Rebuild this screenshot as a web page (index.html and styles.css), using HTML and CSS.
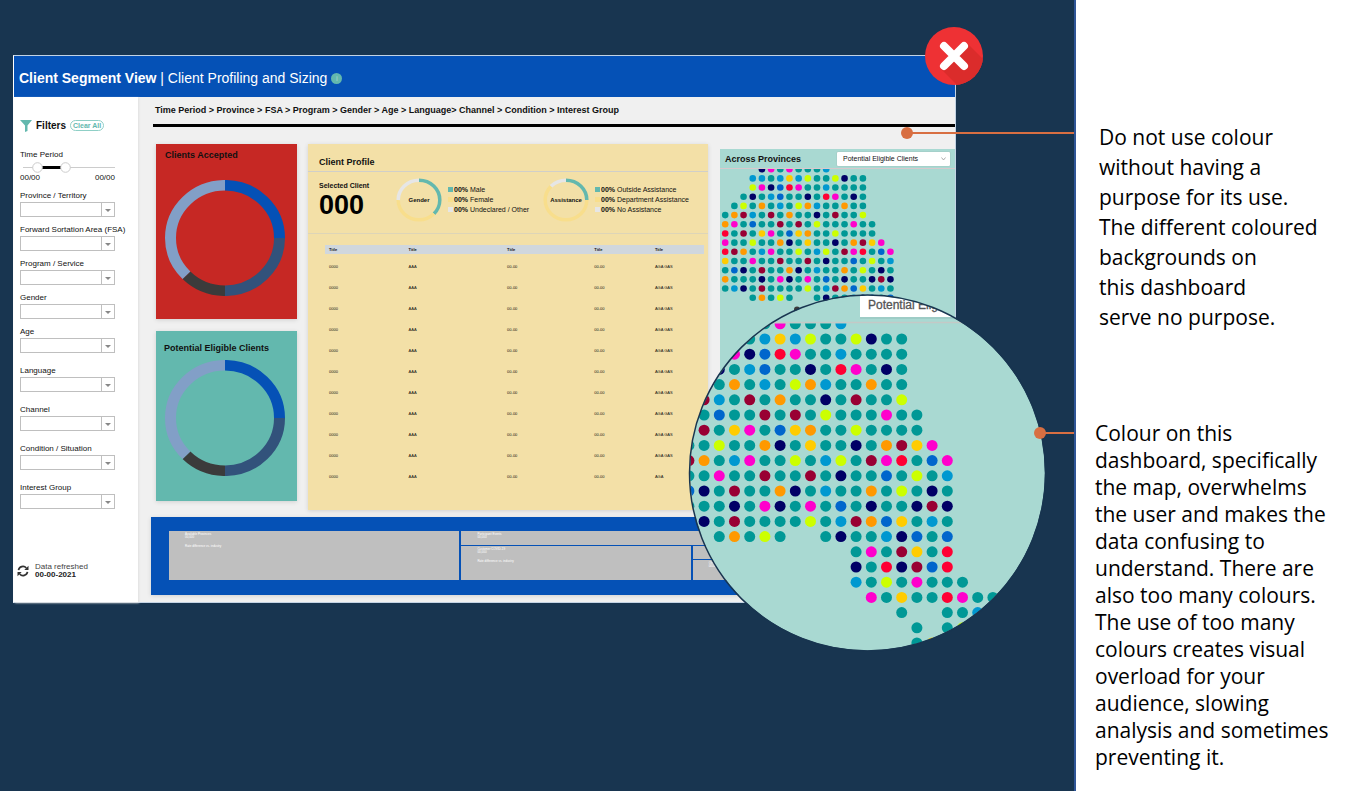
FILE: index.html
```html
<!DOCTYPE html>
<html lang="en">
<head>
<meta charset="utf-8">
<title>Client Segment View</title>
<link rel="stylesheet" href="styles.css">
</head>
<body>
<svg width="0" height="0" class="defs" aria-hidden="true">
  <symbol id="ring" viewBox="0 0 120 116">
    <g fill="none" stroke-width="11" transform="translate(60 58) scale(1 .967) rotate(-90)">
      <circle r="54.5" pathLength="360" stroke="#0551b6" stroke-dasharray="90 270"/>
      <circle r="54.5" pathLength="360" stroke="#32527b" stroke-dasharray="90 270" stroke-dashoffset="-90"/>
      <circle r="54.5" pathLength="360" stroke="#3b3b3b" stroke-dasharray="45 315" stroke-dashoffset="-180"/>
      <circle r="54.5" pathLength="360" stroke="#829fc7" stroke-dasharray="135 225" stroke-dashoffset="-225"/>
    </g>
  </symbol>
</svg>
<div class="slide">
  <main class="stage">
    <div class="frame">
      <div class="dashboard">
        <header class="topbar">
          <h1><b>Client Segment View</b> | Client Profiling and Sizing</h1>
          <span class="info">i</span>
        </header>
        <div class="body">
          <form class="filters">
            <div class="filters-head">
              <svg width="12" height="12" viewBox="0 0 12 12"><path d="M0 0H12L7.5 5.500V11L5 12V5.500Z" fill="#63b8ae"/></svg>
              <h2>Filters</h2>
              <button type="button" class="clear">Clear All</button>
            </div>
            <div class="period">
              <span>Time Period</span>
              <svg class="slider" viewBox="0 0 95 11"><path d="M3 5.500H95" stroke="#ccc"/><path d="M17 5.500H46" stroke="#000" stroke-width="3"/><circle cx="17.500" cy="5.500" r="4.800" fill="#fff" stroke="#ccc"/><circle cx="45.500" cy="5.500" r="4.800" fill="#fff" stroke="#ccc"/></svg>
              <div class="range"><span>00/00</span><span>00/00</span></div>
            </div>
            <div class="fields">
              <label class="field">Province / Territory<span class="drop"><select></select></span></label>
              <label class="field">Forward Sortation Area (FSA)<span class="drop"><select></select></span></label>
              <label class="field">Program / Service<span class="drop"><select></select></span></label>
              <label class="field">Gender<span class="drop"><select></select></span></label>
              <label class="field loose">Age<span class="drop"><select></select></span></label>
              <label class="field loose">Language<span class="drop"><select></select></span></label>
              <label class="field loose">Channel<span class="drop"><select></select></span></label>
              <label class="field loose">Condition / Situation<span class="drop"><select></select></span></label>
              <label class="field">Interest Group<span class="drop"><select></select></span></label>
            </div>
            <div class="refreshed">
              <svg width="12" height="12" viewBox="0 0 12 12"><g fill="none" stroke="#333" stroke-width="1.700"><path d="M1.500 5.200A4.500 4.500 0 0 1 9.300 3"/><path d="M10.500 6.800A4.500 4.500 0 0 1 2.700 9"/></g><path d="M11.500 .8V5H7.300ZM.5 11.200V7H4.700Z" fill="#333"/></svg>
              <p>Data refreshed<br><b>00-00-2021</b></p>
            </div>
          </form>
          <section class="content">
            <nav class="crumbs">Time Period &gt; Province &gt; FSA &gt; Program &gt; Gender &gt; Age &gt; Language&gt; Channel &gt; Condition &gt; Interest Group</nav>
            <hr class="rule">
            <div class="panels">
              <div class="left">
                <article class="card accepted"><h3>Clients Accepted</h3><svg class="donut"><use href="#ring"/></svg></article>
                <article class="card eligible"><h3>Potential Eligible Clients</h3><svg class="donut"><use href="#ring"/></svg></article>
              </div>
              <article class="card profile">
                <h3>Client Profile</h3>
                <div class="summary">
                  <div class="selected"><span>Selected Client</span><strong>000</strong></div>
                  <div class="mini">
                    <svg viewBox="0 0 46 44"><g fill="none" stroke-width="3.500" transform="translate(23 22) scale(1 .95) rotate(-90)"><circle r="20.800" pathLength="360" stroke="#63b8ae" stroke-dasharray="134 226"/><circle r="20.800" pathLength="360" stroke="#f8de8c" stroke-dasharray="136 224" stroke-dashoffset="-134"/><circle r="20.800" pathLength="360" stroke="#e6e6e6" stroke-dasharray="90 270" stroke-dashoffset="-270"/></g></svg>
                    <b>Gender</b>
                  </div>
                  <ul class="legend gender">
                    <li><b>00%</b> Male</li><li class="yellow"><b>00%</b> Female</li><li class="grey"><b>00%</b> Undeclared / Other</li>
                  </ul>
                  <div class="mini">
                    <svg viewBox="0 0 46 44"><g fill="none" stroke-width="3.500" transform="translate(23 22) scale(1 .95) rotate(-90)"><circle r="20.800" pathLength="360" stroke="#63b8ae" stroke-dasharray="90 270"/><circle r="20.800" pathLength="360" stroke="#f8de8c" stroke-dasharray="224 136" stroke-dashoffset="-90"/><circle r="20.800" pathLength="360" stroke="#e6e6e6" stroke-dasharray="46 314" stroke-dashoffset="-314"/></g></svg>
                    <b>Assistance</b>
                  </div>
                  <ul class="legend">
                    <li><b>00%</b> Outside Assistance</li><li class="yellow"><b>00%</b> Department Assistance</li><li class="grey"><b>00%</b> No Assistance</li>
                  </ul>
                </div>
                <table>
                  <thead><tr><th>Title</th><th>Title</th><th>Title</th><th>Title</th><th>Title</th></tr></thead>
                  <tbody>
                    <tr><td>0000</td><td>AAA</td><td>00-00</td><td>00-00</td><td>AGA GAS</td></tr>
                    <tr><td>0000</td><td>AAA</td><td>00-00</td><td>00-00</td><td>AGA GAS</td></tr>
                    <tr><td>0000</td><td>AAA</td><td>00-00</td><td>00-00</td><td>AGA GAS</td></tr>
                    <tr><td>0000</td><td>AAA</td><td>00-00</td><td>00-00</td><td>AGA GAS</td></tr>
                    <tr><td>0000</td><td>AAA</td><td>00-00</td><td>00-00</td><td>AGA GAS</td></tr>
                    <tr><td>0000</td><td>AAA</td><td>00-00</td><td>00-00</td><td>AGA GAS</td></tr>
                    <tr><td>0000</td><td>AAA</td><td>00-00</td><td>00-00</td><td>AGA GAS</td></tr>
                    <tr><td>0000</td><td>AAA</td><td>00-00</td><td>00-00</td><td>AGA GAS</td></tr>
                    <tr><td>0000</td><td>AAA</td><td>00-00</td><td>00-00</td><td>AGA GAS</td></tr>
                    <tr><td>0000</td><td>AAA</td><td>00-00</td><td>00-00</td><td>AGA GAS</td></tr>
                    <tr><td>0000</td><td>AAA</td><td>00-00</td><td>00-00</td><td>AGA</td></tr>
                  </tbody>
                </table>
              </article>
              <article class="provinces">
                <div class="provinces-head">
                  <h3>Across Provinces</h3>
                  <span class="pick"><select aria-label="Client group"><option>Potential Eligible Clients</option></select><svg width="5" height="4" viewBox="0 0 5 4"><path d="M.5 .5L2.500 3L4.500 .5" fill="none" stroke="#999" stroke-width=".8"/></svg></span>
                </div>
                <svg class="map" viewBox="720 169 235 145"><g id="map-small"></g><circle cx="797" cy="309.500" r="3" fill="#3b3b3b"/></svg>
              </article>
            </div>
            <div class="treemap">
              <div class="tile a"><p>Available Provinces<br>00,000</p><p>Rate difference vs. industry</p></div>
              <div class="tile b"><p>Participant Events<br>00,000</p></div>
              <div class="tile c"><p>Customer COVID-19<br>00,000</p><p>Rate difference vs. industry</p></div>
              <div class="tile d"></div>
              <div class="tile e"><p>Other<br>0000</p></div>
            </div>
          </section>
        </div>
      </div>
      <svg class="lens" viewBox="688 293 358 358">
        <clipPath id="lens-clip"><circle cx="867.500" cy="472" r="177.500"/></clipPath>
        <clipPath id="dots-clip"><rect x="688" y="322.500" width="358" height="328"/></clipPath>
        <g clip-path="url(#lens-clip)">
          <rect x="688" y="293" width="358" height="358" fill="#a9d9d2"/>
          <rect x="860" y="290" width="120" height="28" fill="#8fb8b3" opacity=".4"/>
          <rect x="860" y="290" width="120" height="26" fill="#fff"/>
          <text x="868" y="308" class="lens-text">Potential Eligible Clients</text>
          <path d="M688 321.500H1046" stroke="#c4c9c6" stroke-width="1.500"/>
          <g id="map-large" clip-path="url(#dots-clip)"></g>
        </g>
        <circle cx="867.500" cy="472" r="178" fill="none" stroke="#183550" stroke-width="1.500"/>
      </svg>
      <svg class="badge" viewBox="0 0 58 58"><clipPath id="badge-clip"><circle cx="29" cy="29" r="29"/></clipPath><g clip-path="url(#badge-clip)"><path d="M0 0H58V58H0Z" fill="#ee3134"/><path d="M42 16L66 40L40 66L16 42Z" fill="#db2c2b"/></g><path d="M19 19L39 39M39 19L19 39" stroke="#fff" stroke-width="8" stroke-linecap="round"/></svg>
    </div>
    <span class="pointer first"></span>
    <span class="pointer second"></span>
  </main>
  <aside class="notes">
    <p class="note-one">Do not use colour<br>without having a<br>purpose for its use.<br>The different coloured<br>backgrounds on<br>this dashboard<br>serve no purpose.</p>
    <p class="note-two">Colour on this<br>dashboard, specifically<br>the map, overwhelms<br>the user and makes the<br>data confusing to<br>understand. There are<br>also too many colours.<br>The use of too many<br>colours creates visual<br>overload for your<br>audience, slowing<br>analysis and sometimes<br>preventing it.</p>
  </aside>
</div>
<script src="map.js"></script>
</body>
</html>
```
FILE: styles.css
```css
* { box-sizing: border-box; }
body { margin: 0; font-family: "Liberation Sans", Arial, sans-serif; color: #111; }
h1, h2, h3, p, ul { margin: 0; padding: 0; }
svg { display: block; }
.defs { position: absolute; }
.slide { display: flex; min-height: 100vh; background: #183550; }
.stage { flex: 1; position: relative; padding: 55px 118px 40px 13px; border-right: 2px solid #2f5597; }
.frame { position: relative; }
.dashboard { background: #f0f0f0; border: 1px solid #c3d3e4; border-left-color: #fff; }

.topbar { display: flex; align-items: center; gap: 4px; height: 41px; padding: 3px 5px 0; background: #0551b6; color: #fff; }
.topbar h1 { font-size: 14px; font-weight: 400; }
.info { display: grid; place-items: center; width: 11px; height: 11px; border-radius: 50%; background: #63b8ae; color: #a5d8d0; font-size: 8px; }

.body { display: flex; }
.filters { width: 124px; padding: 22px 6px 0; background: #fff; font-size: 8px; box-shadow: 1px 1px 2px #e0e0e0; }
.filters-head { display: flex; align-items: center; gap: 4px; height: 13px; }
.filters h2 { font-size: 10px; }
.clear { height: 11px; padding: 0 2px; border: 1px solid #8fcfc6; border-radius: 6px; background: #fff; color: #63b8ae; font: 700 7px/9px "Liberation Sans", sans-serif; }
.period { width: 95px; margin-top: 17px; line-height: 12px; }
.slider { width: 95px; height: 11px; margin-top: 1px; }
.range { display: flex; justify-content: space-between; line-height: 9px; }
.fields { margin-top: 7px; }
.field { display: block; margin-bottom: 6px; line-height: 13px; white-space: nowrap; }
.field.loose { margin-bottom: 11px; }
.drop { display: block; position: relative; width: 95px; height: 15px; }
.drop select { display: block; width: 100%; height: 100%; padding: 0; border: 1px solid #bfbfbf; border-radius: 0; background: linear-gradient(#bfbfbf, #bfbfbf) right 12px top / 1px 100% no-repeat #fff; appearance: none; }
.drop::after { content: ""; position: absolute; right: 4px; top: 7px; border: 3px solid transparent; border-top-color: #888; }
.refreshed { display: flex; align-items: center; gap: 6px; margin: 54px 0 16px -3px; line-height: 8px; color: #444; }
.refreshed b { color: #222; }

.content { flex: 1; min-width: 0; padding: 0 0 7px 13px; }
.crumbs { padding: 7px 0 8px 4px; font-size: 9px; font-weight: 700; line-height: 12px; }
.rule { height: 3px; margin: 0 0 0 2px; border: 0; background: #000; }
.panels { display: flex; padding: 17px 0 7px 5px; }
.left { display: flex; flex-direction: column; gap: 12px; width: 141px; margin: 0 11px 9px 0; }
.card { box-shadow: 0 1px 4px #d0d0d0; }
.card h3, .provinces h3 { font-size: 9px; line-height: 12px; }
.donut { width: 120px; height: 116px; margin-left: 9px; }
.accepted { height: 175px; padding-top: 5px; background: #c62824; }
.accepted h3 { padding-left: 9px; }
.accepted .donut { margin-top: 19px; }
.eligible { height: 170px; padding-top: 11px; background: #63b8ae; }
.eligible h3 { padding-left: 8px; }
.eligible .donut { margin-top: 6px; }

.profile { flex: 1; min-width: 0; margin-right: 12px; background: #f3e0a7; }
.profile h3 { padding: 12px 11px 3px; border-bottom: 1px solid #d0cfc9; }
.summary { display: flex; align-items: center; height: 62px; padding: 0 0 5px 11px; border-bottom: 1px solid #ddd5b8; font-size: 7px; }
.selected { display: flex; flex-direction: column; width: 77px; font-weight: 700; line-height: 10px; }
.selected strong { font-size: 27px; line-height: 29px; color: #000; }
.mini { display: grid; flex: none; width: 46px; }
.mini svg, .mini b { grid-area: 1 / 1; }
.mini svg { width: 46px; height: 44px; }
.mini b { place-self: center; font-size: 6px; }
.legend { flex: none; margin-left: 6px; list-style: none; line-height: 10px; white-space: nowrap; }
.legend.gender { width: 89px; margin-right: 6px; }
.legend li::before { content: ""; display: inline-block; width: 5px; height: 5px; margin-right: 1px; background: #63b8ae; }
.legend .yellow::before { background: #f8de8c; }
.legend .grey::before { background: #e6e6e6; }
table { width: calc(100% - 21px); margin: 11px 4px 20px 17px; border-collapse: collapse; table-layout: fixed; font-size: 4px; line-height: 5px; text-align: left; }
th, td { padding: 0 0 0 4px; }
th { height: 9px; background: #d0d7dd; }
td { height: 21px; padding-top: 4px; }
th:nth-child(1) { width: 21%; }
th:nth-child(2) { width: 26%; }
th:nth-child(3) { width: 23%; }
th:nth-child(4) { width: 16%; }

.provinces { width: 235px; margin-top: 5px; background: #a9d9d2; }
.provinces-head { display: flex; align-items: center; justify-content: space-between; height: 20px; padding: 0 5px; border-bottom: 1px solid #d8c9cd; }
.pick { display: flex; align-items: center; width: 113px; height: 14px; padding-right: 4px; border-radius: 1px; background: #fff; box-shadow: 0 0 1px #888; }
.pick select { flex: 1; padding: 0 0 0 6px; border: 0; background: none; appearance: none; color: #111; font: 7px/12px "Liberation Sans", sans-serif; }
.map { width: 100%; }

.treemap { display: grid; grid-template: 14px 13px 20px / 290fr 229fr 244fr; gap: 1px 2px; padding: 14px 18px 15px; background: #0551b6; box-shadow: 0 1px 4px #d0d0d0; color: #fff; font-size: 3px; line-height: 3px; }
.tile { padding: 2px 16px; background: #bfbfbf; }
.tile p + p { margin-top: 6px; }
.a { grid-area: 1 / 1 / 4 / 2; }
.b { grid-area: 1 / 2 / 2 / 4; }
.c { grid-area: 2 / 2 / 4 / 3; }

.lens { position: absolute; top: 239px; right: -90px; width: 358px; height: 358px; }
.lens-text { font-size: 12px; fill: #555; stroke: #555; stroke-width: .3px; }
.badge { position: absolute; top: -28px; right: -27px; width: 58px; height: 58px; }
.pointer { position: absolute; right: 0; height: 2px; background: #d86f42; }
.pointer::before { content: ""; position: absolute; left: -6px; top: -5px; width: 12px; height: 12px; border-radius: 50%; background: #d86f42; }
.first { top: 132px; width: 167px; }
.second { top: 432px; width: 34px; }

.notes { width: 276px; padding: 122px 10px 20px 19px; background: #fff; color: #000; font: 21px/27px "Open Sans", Calibri, sans-serif; white-space: nowrap; }
.note-one { padding-left: 4px; line-height: 30px; }
.note-two { margin-top: 88px; }
```
FILE: map.js
```js
const COLOURS = { T: "#009896", S: "#0098d0", B: "#0066cc", N: "#000066", M: "#ff00cc", R: "#ff0033", D: "#990033", O: "#ff9900", Y: "#ffcc00", L: "#ccff00" };
const ROWS = [
  "....NMTMTTTS",
  "...SSTSYSLTTLNTT",
  "...LMNBRMTTSTTTT",
  "..TNTSBTTNTRMTNT",
  ".TLTOTSTLOSTTOTT",
  "TODSTDTOTTNTDTTL",
  "OMTBTTDTDTLTTTMTT",
  "RTDTYMTBYOTTLTTTT",
  "MTTLTTONTYTTNTODYM",
  "RDOTSMTTLTSLTDMRTBM",
  "YTTMTTDTTDTNTTBTLTS",
  "TBNTDTTONTSTTOTLTNT",
  "OTTTNTMNTMTBTNTTNDN",
  "TSNTDTTTTLTSDOBYTST",
  "...TOTLT..TNTTSNBTB",
  "............TMTDYTR",
  "............NTRNDBR",
  "............STLTMTTT",
  ".............MTYTTRMTT",
  "...............T..TTS",
  "................T.TL",
  "................TY"
];

function drawMap(id, left, top, pitch, radius) {
  const group = document.getElementById(id);
  ROWS.forEach((row, r) => [...row].forEach((key, c) => {
    if (key === ".") return;
    const dot = document.createElementNS("http://www.w3.org/2000/svg", "circle");
    dot.setAttribute("cx", left + c * pitch);
    dot.setAttribute("cy", top + r * pitch);
    dot.setAttribute("r", radius);
    dot.setAttribute("fill", COLOURS[key]);
    group.append(dot);
  }));
}

drawMap("map-small", 725.2, 169.2, 9.18, 3.3);
drawMap("map-large", 673.7, 322.8, 15.2, 5.5);
```
